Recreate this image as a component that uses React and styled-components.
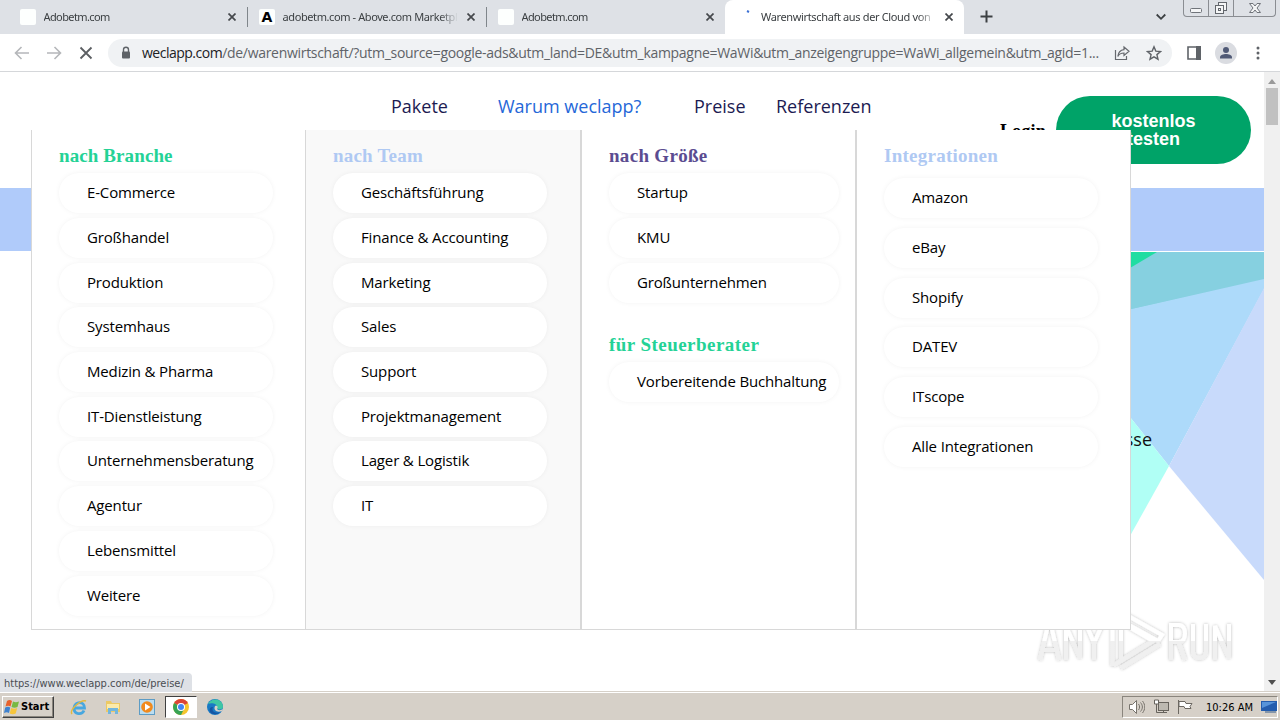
import React from 'react';
import styled, { createGlobalStyle } from 'styled-components';

const GlobalStyle = createGlobalStyle`
    * { box-sizing: border-box; }
    body {
        margin: 0;
        overflow: hidden;
        background: #fff;
    }
`;

const ui = '"DejaVu Sans Condensed", "DejaVu Sans", sans-serif';

const Screen = styled.div`
    position: relative;
    display: flex;
    flex-direction: column;
    width: 1280px;
    height: 720px;
    overflow: hidden;
    font-family: ${ui};
    svg { display: block; flex: none; }
`;

/* ---------- browser chrome ---------- */

const TabStrip = styled.div`
    display: flex;
    height: 34px;
    flex: none;
    background: #dee1e6;
`;

const Tab = styled.div`
    display: flex;
    align-items: center;
    width: ${p => p.$width}px;
    height: 34px;
    padding: 0 11px 0 ${p => p.$left}px;
    background: ${p => (p.$active ? '#fff' : 'transparent')};
    border-radius: ${p => (p.$active ? '8px 8px 0 0' : '0')};
`;

const Favicon = styled.span`
    width: 16px;
    height: 16px;
    flex: none;
    margin-right: 7.5px;
    background: #fdfffe;
    border-radius: 2px;
    color: #000;
    font: 900 14px/17px "DejaVu Sans", sans-serif;
    text-align: center;
`;

const TabTitle = styled.span`
    flex: 1;
    overflow: hidden;
    white-space: nowrap;
    color: #3c4043;
    font-family: "Noto Sans", sans-serif;
    font-size: 11px;
    line-height: 16px;
    letter-spacing: ${p => p.$spacing || 0}px;
    margin-right: 9px;
    -webkit-mask-image: linear-gradient(to right, #000 calc(100% - 18px), transparent);
`;

const Separator = styled.span`
    width: 1px;
    height: 20px;
    margin-top: 7px;
    background: #80868b;
`;

const NewTab = styled.div`
    padding: 10px 0 0 16px;
    flex: 1;
`;

const TabSearch = styled.div`
    padding: 13px 17px 0 0;
`;

const WindowButtons = styled.div`
    display: flex;
    width: 93px;
    height: 17px;
    margin-right: 4px;
    border: 1px solid #8a8d92;
    border-top: 0;
    border-radius: 0 0 4px 4px;
`;

const WindowButton = styled.span`
    display: flex;
    justify-content: center;
    width: ${p => p.$width}px;
    border-right: ${p => (p.$last ? 0 : '1px solid #8a8d92')};
`;

const Toolbar = styled.div`
    display: flex;
    align-items: center;
    height: 38px;
    flex: none;
    padding: 0 12px 0 14px;
    background: #fff;
    border-bottom: 1px solid #d5d7da;
`;

const NavButtons = styled.div`
    display: flex;
    gap: 16px;
    width: 94px;
`;

const AddressBar = styled.div`
    display: flex;
    align-items: center;
    width: 1064px;
    height: 28px;
    padding: 0 10px 0 12px;
    background: #f0f2f4;
    border-radius: 14px;
`;

const Url = styled.span`
    width: 972px;
    margin-left: 10px;
    white-space: nowrap;
    color: #5f6368;
    font-family: "Open Sans", sans-serif;
    font-size: 14px;
    line-height: 20px;
    letter-spacing: -0.3px;
    b {
        font-weight: 400;
        color: #202124;
        letter-spacing: -0.5px;
    }
`;

const Actions = styled.span`
    display: flex;
    gap: 16px;
`;

const ToolbarIcons = styled.div`
    display: flex;
    align-items: center;
    padding-left: 15px;
`;

const Avatar = styled.span`
    margin: 0 19px 0 14px;
`;

/* ---------- page ---------- */

const Viewport = styled.div`
    display: flex;
    flex: none;
    height: 619px;
`;

const Page = styled.main`
    position: relative;
    width: 1264px;
    overflow: hidden;
    background: #fff;
`;

const Header = styled.header`
    display: flex;
    align-items: flex-start;
    height: 116px;
    padding: 24px 13px 0 391px;
`;

const Nav = styled.nav`
    display: flex;
    width: 609px;
`;

const NavLink = styled.a`
    width: ${p => p.$width}px;
    color: ${p => (p.$active ? '#2567d8' : '#1c1b52')};
    font: 400 18px/21px "Open Sans", sans-serif;
    white-space: nowrap;
`;

const Login = styled.a`
    width: 56px;
    padding-top: 24px;
    color: #000;
    font: bold 18px/22px "Liberation Serif", serif;
    letter-spacing: 0.2px;
`;

const TrialButton = styled.a`
    display: flex;
    align-items: center;
    justify-content: center;
    width: 195px;
    height: 68px;
    border-radius: 34px;
    background: #00a368;
    color: #fff;
    font: bold 18px/18px "Liberation Sans", sans-serif;
    text-align: center;
`;

const Band = styled.div`
    height: 63px;
    background: #b0cbfa;
`;

const Hero = styled.section`
    display: flex;
    justify-content: flex-end;
    margin-top: 1px;
    height: 439px;
`;

const HeroText = styled.p`
    margin: 175px -22px 0 0;
    z-index: 1;
    color: #111;
    font: 400 18px/24px "Open Sans", sans-serif;
`;

const MegaMenu = styled.div`
    position: absolute;
    left: 31px;
    top: 58px;
    z-index: 2;
    display: grid;
    grid-template-columns: 274px 275px 275px 276px;
    width: 1100px;
    height: 500px;
    background: #fff;
`;

const Column = styled.div`
    padding: 14px 0 0 27px;
    background: ${p => (p.$shaded ? '#f9f9f9' : '#fff')};
    border: solid #d8d8d8;
    border-width: 0 ${p => p.$right || 0}px 1px ${p => p.$line || 1}px;
`;

const Title = styled.h3`
    height: 29px;
    margin: ${p => p.$top || 0}px 0 0;
    color: ${p => p.$color};
    font: bold 19px/24px "Liberation Serif", serif;
    letter-spacing: ${p => p.$spacing || 0.1}px;
`;

const Pills = styled.div`
    display: flex;
    flex-direction: column;
    gap: ${p => p.$gap || 4.735}px;
    padding-top: ${p => p.$top || 0.05}px;
`;

const Pill = styled.a`
    width: ${p => p.$width || 214}px;
    height: 40px;
    padding-left: 28px;
    border-radius: 20px;
    background: #fff;
    box-shadow: 0 0 5px rgba(0, 0, 0, 0.05);
    color: #000;
    font: 400 15px/39px "Open Sans", sans-serif;
    letter-spacing: -0.15px;
    white-space: nowrap;
`;

const Scrollbar = styled.div`
    display: flex;
    flex-direction: column;
    align-items: center;
    justify-content: space-between;
    width: 16px;
    padding: 7px 0 6px;
    background: #f0f0f0;
`;

const Thumb = styled.div`
    width: 12px;
    height: 37px;
    margin: 4px 0 auto;
    background: #c1c1c1;
`;

const StatusBubble = styled.div`
    position: absolute;
    left: 0;
    top: 673px;
    width: 192px;
    height: 19px;
    padding-left: 4px;
    border-top-right-radius: 4px;
    background: #dee1e6;
    color: #4a4d52;
    font-size: 11px;
    line-height: 21px;
    white-space: nowrap;
`;

const Watermark = styled.div`
    position: absolute;
    left: 1032px;
    top: 602px;
`;

/* ---------- taskbar ---------- */

const Taskbar = styled.footer`
    display: flex;
    align-items: center;
    height: 29px;
    padding: 2px 2px 0 2px;
    background: #d6d0c8;
    border-top: 1px solid #d6d0c8;
    box-shadow: inset 0 1px #fff;
`;

const StartButton = styled.button`
    display: flex;
    align-items: center;
    gap: 1px;
    width: 52px;
    height: 22px;
    margin-right: 7px;
    padding: 0 0 0 1px;
    border: 1px solid;
    border-color: #fff #404040 #404040 #fff;
    box-shadow: inset -1px -1px #8a857d;
    background: #d6d0c8;
    color: #000;
    font: bold 11px/16px ${ui};
`;

const Launch = styled.div`
    display: flex;
    align-items: center;
    justify-content: center;
    width: ${p => p.$width || 36}px;
    height: 22px;
    background: ${p => (p.$active ? '#fff' : 'transparent')};
    border: ${p => (p.$active ? '1px solid' : '0')};
    border-color: #404040 #fff #fff #404040;
`;

const Tray = styled.div`
    display: flex;
    align-items: center;
    gap: 8px;
    width: 156px;
    height: 22px;
    margin-left: auto;
    padding-left: 5px;
    border: 1px solid;
    border-color: #8a857d #fff #fff #8a857d;
`;

const Clock = styled.span`
    width: 47px;
    margin-left: 5px;
    color: #000;
    font-size: 11px;
    white-space: nowrap;
`;

const CloseIcon = () => (
    <svg width="8" height="8" viewBox="0 0 8 8">
        <path d="M.5.5l7 7M7.5.5l-7 7" stroke="#45484c" strokeWidth="1.7" fill="none" />
    </svg>
);

const ArrowIcon = ({ forward }) => (
    <svg width="16" height="16" viewBox="0 0 16 16">
        <path
            d={forward ? 'M1 8h13M8.5 2l6 6-6 6' : 'M15 8H2M7.5 2l-6 6 6 6'}
            stroke="#b5b7ba" strokeWidth="1.6" fill="none"
        />
    </svg>
);

const branches = [
    'E-Commerce', 'Großhandel', 'Produktion', 'Systemhaus', 'Medizin & Pharma',
    'IT-Dienstleistung', 'Unternehmensberatung', 'Agentur', 'Lebensmittel', 'Weitere',
];
const teams = [
    'Geschäftsführung', 'Finance & Accounting', 'Marketing', 'Sales', 'Support',
    'Projektmanagement', 'Lager & Logistik', 'IT',
];
const sizes = ['Startup', 'KMU', 'Großunternehmen'];
const integrations = ['Amazon', 'eBay', 'Shopify', 'DATEV', 'ITscope', 'Alle Integrationen'];

const PillList = ({ items, width, gap, top }) => (
    <Pills $gap={gap} $top={top}>
        {items.map(item => <Pill key={item} $width={width}>{item}</Pill>)}
    </Pills>
);

const Tabs = () => (
    <TabStrip>
        <Tab $width={247} $left={20}>
            <Favicon />
            <TabTitle $spacing={-0.6}>Adobetm.com</TabTitle>
            <CloseIcon />
        </Tab>
        <Separator />
        <Tab $width={238} $left={11}>
            <Favicon>A</Favicon>
            <TabTitle $spacing={-0.4}>adobetm.com - Above.com Marketpl</TabTitle>
            <CloseIcon />
        </Tab>
        <Separator />
        <Tab $width={238} $left={11}>
            <Favicon />
            <TabTitle $spacing={-0.6}>Adobetm.com</TabTitle>
            <CloseIcon />
        </Tab>
        <Tab $width={239} $left={18} $active>
            <svg width="18" height="18" viewBox="0 0 18 18">
                <path d="M4 3l2 1" stroke="#3b6fd4" strokeWidth="2" />
            </svg>
            <TabTitle $spacing={-0.35}>Warenwirtschaft aus der Cloud von</TabTitle>
            <CloseIcon />
        </Tab>
        <NewTab>
            <svg width="13" height="13" viewBox="0 0 13 13">
                <path d="M6.5.5v12M.5 6.5h12" stroke="#3c4043" strokeWidth="2" />
            </svg>
        </NewTab>
        <TabSearch>
            <svg width="10" height="8" viewBox="0 0 10 8">
                <path d="M.7 1.5L5 5.8l4.3-4.3" stroke="#3c4043" strokeWidth="1.8" fill="none" />
            </svg>
        </TabSearch>
        <WindowButtons>
            <WindowButton $width={25}>
                <svg width="12" height="16" viewBox="0 0 12 16">
                    <rect x=".5" y="8.5" width="11" height="4" rx="1" fill="#f4f5f6" stroke="#70747a" />
                </svg>
            </WindowButton>
            <WindowButton $width={25}>
                <svg width="14" height="16" viewBox="0 0 14 16" fill="#f4f5f6" stroke="#63676d">
                    <rect x="4.5" y="2.5" width="8" height="8" />
                    <rect x="1.5" y="5.5" width="8" height="8" />
                    <rect x="4.5" y="8.5" width="2" height="2" />
                </svg>
            </WindowButton>
            <WindowButton $width={41} $last>
                <svg width="12" height="16" viewBox="0 0 12 16">
                    <path
                        d="M.5 3.5H4L6 6l2-2.500h3.500L8 8l3.500 4.500H8L6 10l-2 2.500H.5L4 8z"
                        fill="#f4f5f6" stroke="#70747a"
                    />
                </svg>
            </WindowButton>
        </WindowButtons>
    </TabStrip>
);

const Address = () => (
    <Toolbar>
        <NavButtons>
            <ArrowIcon />
            <ArrowIcon forward />
            <svg width="16" height="16" viewBox="0 0 16 16">
                <path d="M2.5 2.5l11 11M13.5 2.5l-11 11" stroke="#5b5e62" strokeWidth="1.8" />
            </svg>
        </NavButtons>
        <AddressBar>
            <svg width="12" height="14" viewBox="0 0 12 14">
                <path d="M3.5 6V3.8a2.500 2.500 0 015 0V6" fill="none" stroke="#5f6368" strokeWidth="1.4" />
                <rect x="2" y="5.5" width="8" height="7" rx="1" fill="#5f6368" />
            </svg>
            <Url>
                <b>weclapp.com</b>
                /de/warenwirtschaft/?utm_source=google-ads&amp;utm_land=DE&amp;utm_kampagne=WaWi&amp;utm_anzeigengruppe=WaWi_allgemein&amp;utm_agid=1...
            </Url>
            <Actions>
                <svg width="16" height="16" viewBox="0 0 16 16" fill="none" stroke="#66696e" strokeWidth="1.2">
                    <path d="M1.5 5v9.500h11V11" />
                    <path d="M10 2l5 4.300-5 4.200V8C7 8 5 9 3.800 11.500 4.200 7.500 6.500 5 10 4.600z" />
                </svg>
                <svg width="16" height="16" viewBox="0 0 16 16">
                    <path
                        d="M8 1.800l1.800 4.300 4.700.4-3.600 3.100 1.100 4.600L8 11.800l-4 2.400 1.100-4.600-3.600-3.100 4.700-.4z"
                        fill="none" stroke="#5f6368" strokeWidth="1.4"
                    />
                </svg>
            </Actions>
        </AddressBar>
        <ToolbarIcons>
            <svg width="14" height="14" viewBox="0 0 14 14">
                <path d="M1 1h12v12H1z" fill="none" stroke="#5f6368" strokeWidth="1.6" />
                <path d="M9 0h5v14H9z" fill="#5f6368" />
            </svg>
            <Avatar>
                <svg width="22" height="22" viewBox="0 0 22 22">
                    <circle cx="11" cy="11" r="11" fill="#dadce1" />
                    <circle cx="11" cy="8" r="3" fill="#505a76" />
                    <path d="M5 16.500v-1.300c0-2 3.500-3.200 6-3.200s6 1.200 6 3.200v1.300z" fill="#505a76" />
                </svg>
            </Avatar>
            <svg width="4" height="14" viewBox="0 0 4 14" fill="#5f6368">
                <circle cx="2" cy="2" r="1.5" />
                <circle cx="2" cy="7" r="1.5" />
                <circle cx="2" cy="12" r="1.5" />
            </svg>
        </ToolbarIcons>
    </Toolbar>
);

const HeroShapes = () => (
    <svg width="134" height="439" viewBox="1130 252 134 439">
        <path d="M1130 252h134v28l-134 30z" fill="#86d0e0" />
        <path d="M1130 252h27l-27 16z" fill="#20dda2" />
        <path d="M1130 309.500l134-30.500v10l-95 177-39-49z" fill="#addafa" />
        <path d="M1264 288v292l-95-114z" fill="#c8dafb" />
        <path d="M1130 417l39 49-39 70z" fill="#b0fff5" />
    </svg>
);

const WatermarkLogo = () => (
    <svg width="208" height="80" viewBox="0 0 208 80">
        <defs>
            <filter id="soft" x="-10%" y="-10%" width="120%" height="120%">
                <feDropShadow dx="0" dy="0" stdDeviation="1.8" floodColor="#000" floodOpacity=".28" />
            </filter>
            <linearGradient id="fade" gradientUnits="userSpaceOnUse" x1="0" y1="0" x2="0" y2="80">
                <stop offset=".49" stopColor="#fff" />
                <stop offset=".49" stopColor="#f0f0f0" />
            </linearGradient>
        </defs>
        <g filter="url(#soft)" fill="none" stroke="url(#fade)" strokeWidth="4">
            <path d="M8 58l8-35h3l8 35M11 48h13" />
            <path d="M34 58V24l14 32V22" />
            <path d="M54 22l8 19v17M70.500 22L62 41" />
            <path d="M80.500 64V20l5-4" />
            <path d="M89 57V10l41 23-4 6-29-16" />
            <path d="M97 25l24 14-39 24M128 42L89 66" />
            <path d="M139 58V23h8c8 0 8 17 0 17h-8M147 41l6 17" />
            <path d="M161 22v28c0 8 13 8 13 0V22" />
            <path d="M183 58V24l14 32V22" />
        </g>
    </svg>
);

const TaskIcons = () => (
    <>
        <StartButton>
            <svg width="16" height="16" viewBox="0 0 16 16">
                <path d="M3 2c2-1.500 3.500-1.200 5 0L6.500 7.500C5 6.500 3.500 6.500 1.500 7.500z" fill="#e8622c" />
                <path d="M9 2.500c2 1 3.500 1 6 0L13.500 8c-2 1-4 1-6 0z" fill="#78b943" />
                <path d="M1.200 8.500c2-1 3.500-1 5 0L5 14c-1.500-1-3-1-5 0z" fill="#3f82cf" />
                <path d="M7.200 9c2 1 4 1 6 0l-1.500 5.500c-2 1-4 1-6 0z" fill="#f6c53c" />
            </svg>
            Start
        </StartButton>
        <Launch>
            <svg width="18" height="18" viewBox="0 0 18 18" fill="none">
                <path d="M4 10h10.500c0-7-9.500-7.500-10.500 0 0 7 8 7 10 2.500" stroke="#48a7df" strokeWidth="2.8" />
                <path d="M2 16c-3-4 9-15 14-13" stroke="#e3b93d" strokeWidth="1.4" />
            </svg>
        </Launch>
        <Launch $width={32}>
            <svg width="16" height="16" viewBox="0 0 16 16">
                <path d="M1 2h5l1 2h8v9H1z" fill="#ecc964" />
                <path d="M2 5h12v5H2z" fill="#fbeaaa" />
                <path d="M3 15V9h10v6h-3v-3H6v3z" fill="#72b6dd" />
            </svg>
        </Launch>
        <Launch>
            <svg width="16" height="16" viewBox="0 0 16 16">
                <rect x=".5" y=".5" width="15" height="15" fill="#bbddf0" stroke="#5d9cc5" />
                <circle cx="8" cy="8" r="5.8" fill="#f18a1d" />
                <path d="M6 4.500l5.500 3.500L6 11.500z" fill="#fff" />
            </svg>
        </Launch>
        <Launch $width={32} $active>
            <svg width="16" height="16" viewBox="0 0 16 16">
                <circle cx="8" cy="8" r="8" fill="#f5c52e" />
                <path d="M8 8L1.100 4A8 8 0 0114.900 4z" fill="#db4437" />
                <path d="M8 8L1.100 4A8 8 0 008 16l3-6z" fill="#37a354" />
                <circle cx="8" cy="8" r="4" fill="#fff" />
                <circle cx="8" cy="8" r="3" fill="#4285f4" />
            </svg>
        </Launch>
        <Launch>
            <svg width="16" height="16" viewBox="0 0 16 16">
                <circle cx="8" cy="8" r="8" fill="#1979c4" />
                <path d="M1 5c3-7 15-6 15 3 0 3-6 3-6 1 1-4-5-6-9-4z" fill="#3fc6a4" />
                <path d="M6 8c-2 4 2 7 7 5-2 3-8 3-10 0-1-3 0-5 3-5z" fill="#1555a3" />
                <path d="M8 7c3-1 3 2 2 3 2 2 4 1 6 0l-1 2c-5 2-9-1-7-5z" fill="#d6d0c8" />
            </svg>
        </Launch>
    </>
);

const TrayIcons = () => (
    <Tray>
        <svg width="17" height="16" viewBox="0 0 17 16" fill="#fff" stroke="#77736c">
            <path d="M1.500 5.500h3l4-4v13l-4-4h-3z" />
            <path d="M10.500 5c1.500 2 1.500 4 0 6M12.500 3.500c2.500 3 2.500 6 0 9M14.500 2c3 4 3 8 0 12" fill="none" />
        </svg>
        <svg width="16" height="16" viewBox="0 0 16 16" fill="#fff" stroke="#67635d">
            <rect x="5.5" y="3.5" width="10" height="8" fill="#bdb9b1" />
            <path d="M7 13.500h7M10.500 11.500v2M1.500 1v4h4V1z" />
            <path d="M3.500 5v8.500H8" fill="none" />
        </svg>
        <svg width="16" height="16" viewBox="0 0 16 16" fill="#fff" stroke="#6c6862">
            <path d="M1.500 1v14M2 2.500h6l1 2h6l-2 3 1 2H8l-1-2H2z" />
        </svg>
        <Clock>10:26 AM</Clock>
        <svg width="16" height="14" viewBox="0 0 16 14">
            <rect y="1" width="16" height="10" fill="#245dae" />
            <path d="M1 2h14L1 8z" fill="#5794da" />
            <path d="M4 12h11" stroke="#355c8d" />
        </svg>
    </Tray>
);

const App = () => (
    <Screen>
        <GlobalStyle />
        <Tabs />
        <Address />
        <Viewport>
            <Page>
                <Header>
                    <Nav>
                        <NavLink $width={107}>Pakete</NavLink>
                        <NavLink $width={196} $active>Warum weclapp?</NavLink>
                        <NavLink $width={82}>Preise</NavLink>
                        <NavLink $width={95}>Referenzen</NavLink>
                    </Nav>
                    <Login>Login</Login>
                    <TrialButton>kostenlos<br />testen</TrialButton>
                </Header>
                <Band />
                <Hero>
                    <HeroText>sse</HeroText>
                    <HeroShapes />
                </Hero>
                <MegaMenu>
                    <Column>
                        <Title $color="#24d296">nach Branche</Title>
                        <PillList items={branches} />
                    </Column>
                    <Column $shaded>
                        <Title $color="#afc9f3" $spacing={0.2}>nach Team</Title>
                        <PillList items={teams} />
                    </Column>
                    <Column $line={2}>
                        <Title $color="#5b4c91" $spacing={0.3}>nach Größe</Title>
                        <PillList items={sizes} width={230} />
                        <Title $color="#24d296" $top={30} $spacing={0.45}>für Steuerberater</Title>
                        <PillList items={['Vorbereitende Buchhaltung']} width={230} />
                    </Column>
                    <Column $line={2} $right={1}>
                        <Title $color="#afc9f3" $spacing={0.25}>Integrationen</Title>
                        <PillList items={integrations} gap={9.8} top={5} />
                    </Column>
                </MegaMenu>
            </Page>
            <Scrollbar>
                <svg width="8" height="5" viewBox="0 0 8 5"><path d="M0 5l4-5 4 5z" fill="#9a9a9a" /></svg>
                <Thumb />
                <svg width="8" height="5" viewBox="0 0 8 5"><path d="M0 0h8L4 5z" fill="#505050" /></svg>
            </Scrollbar>
        </Viewport>
        <StatusBubble>https://www.weclapp.com/de/preise/</StatusBubble>
        <Watermark><WatermarkLogo /></Watermark>
        <Taskbar>
            <TaskIcons />
            <TrayIcons />
        </Taskbar>
    </Screen>
);

export default App;
